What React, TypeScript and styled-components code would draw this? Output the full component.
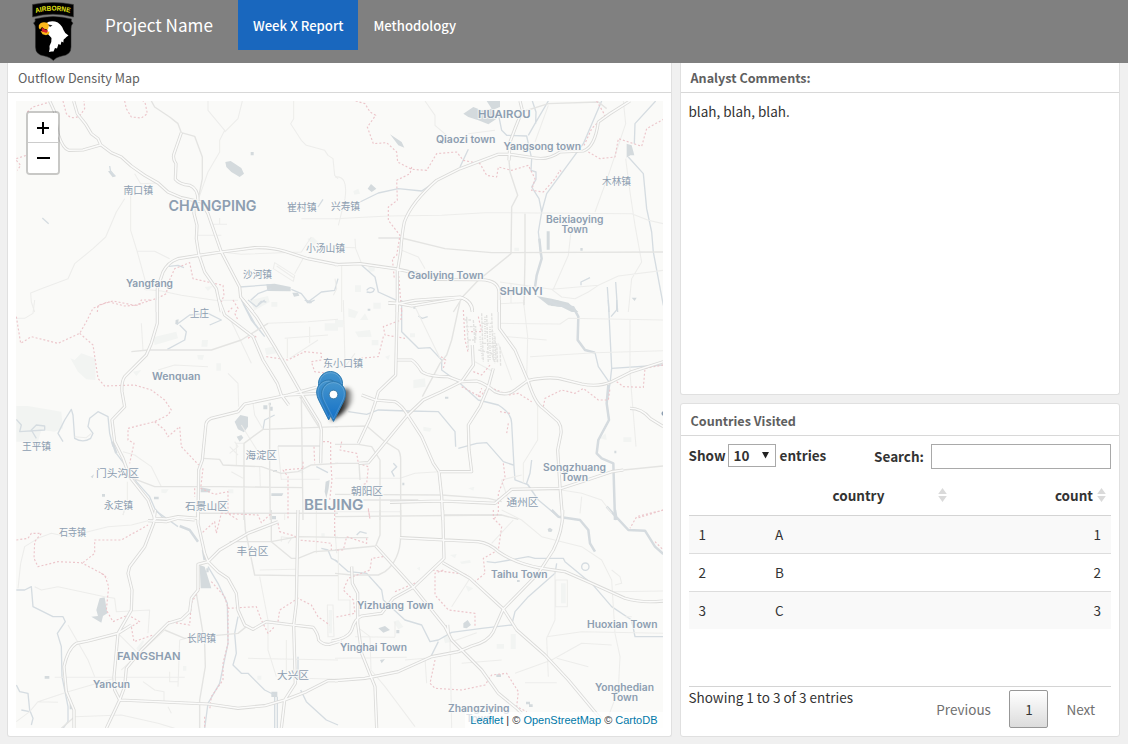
import React from "react";
import styled, { createGlobalStyle } from "styled-components";

const sans = '"Noto Sans CJK SC", "Open Sans", sans-serif';

const GlobalStyle = createGlobalStyle`
  *, *::before, *::after { box-sizing: border-box; }
  body {
    margin: 0;
    background: #f0f0f0;
    color: #333;
    font: 13.5px/20px ${sans};
  }
`;

/* ---------- page ---------- */

const Page = styled.div`
  height: 744px;
  display: flex;
  flex-direction: column;
  overflow: hidden;
`;

const NavBar = styled.header`
  height: 63px;
  flex: none;
  display: flex;
  align-items: flex-start;
  background: #808080;
  color: #fff;
`;

const Brand = styled.div`
  width: 238px;
  display: flex;
  gap: 31px;
  padding-left: 32px;
  font-size: 17.1px;
  line-height: 50px;
  white-space: nowrap;
`;

const NavItem = styled.a<{ $active?: boolean }>`
  height: 50px;
  padding: 0 15px;
  font-size: 13.1px;
  line-height: 51px;
  font-weight: 500;
  white-space: nowrap;
  background: ${(p) => (p.$active ? "#1967be" : "transparent")};
`;

const Dashboard = styled.main`
  flex: 1;
  min-height: 0;
  display: grid;
  grid-template-columns: 665px 440px;
  column-gap: 8px;
  padding: 0 8px 7px 7px;
`;

const Column = styled.div`
  display: flex;
  flex-direction: column;
  gap: 8px;
  min-height: 0;
`;

const Card = styled.section<{ $height?: number; $flush?: boolean }>`
  display: flex;
  flex-direction: column;
  ${(p) => (p.$height ? `height: ${p.$height}px;` : "flex: 1; min-height: 0;")}
  background: #fff;
  border: 1px solid #e0e0e0;
  ${(p) => p.$flush && "border-top: 0;"}
  border-radius: ${(p) => (p.$flush ? "0 0 3px 3px" : "3px")};
`;

const CardTitle = styled.h2<{ $bold?: boolean; $tall?: boolean }>`
  flex: none;
  height: ${(p) => (p.$tall ? 32 : 30)}px;
  margin: 0;
  padding: 0 0 0 ${(p) => (p.$bold ? 9.5 : 10)}px;
  border-bottom: 1px solid #d8d8d8;
  color: #606060;
  font-size: 12.6px;
  font-weight: ${(p) => (p.$bold ? 700 : 400)};
  line-height: ${(p) => (p.$tall ? 33 : 29)}px;
`;

/* ---------- map ---------- */

const MapFrame = styled.div`
  position: relative;
  width: 647px;
  height: 627px;
  margin: 8px 0 0 8px;
  background: #fafaf8;
  overflow: hidden;
`;

const MapSvg = styled.svg`
  display: block;
`;

const ZoomControl = styled.div`
  position: absolute;
  left: 10px;
  top: 10px;
  width: 34px;
  border: 2px solid rgba(0, 0, 0, 0.2);
  border-radius: 4px;
  background-clip: padding-box;
`;

const ZoomButton = styled.button`
  display: grid;
  place-items: center;
  width: 30px;
  height: 30px;
  padding: 0;
  border: 0;
  background: #fff;
  &:first-child {
    border-bottom: 1px solid #ccc;
    border-radius: 2px 2px 0 0;
  }
  &:last-child { border-radius: 0 0 2px 2px; }
  svg { display: block; }
`;

const Attribution = styled.div`
  position: absolute;
  right: 0;
  bottom: 0;
  padding: 0 5.5px 0 5px;
  background: rgba(255, 255, 255, 0.7);
  color: #333;
  font: 11px/16px "Liberation Sans", Arial, sans-serif;
  white-space: nowrap;
  a { color: #0078a8; }
`;

interface Tile {
  x: number;
  y: number;
  motorway: string;
  road: string;
  minor: string;
  river: string;
  wide: string;
  water: string;
  land: string;
  border: string;
}

/* Each tile is drawn at three units to the pixel from its own origin. */
const tiles: Tile[] = [
  {
    x: -8, y: -9,
    motorway:
      "M125 27L140 60L150 125Q165 170 182 175L225 174L280 158 M197 27L208 65L232 95L250 125L270 140L278 158L310 182L340 195L370 222L410 250L450 273L480 300L520 317L580 330 M520 122L498 185Q493 200 504 215L502 262Q515 278 545 280Q570 290 570 325 M580 330L600 365L640 480L695 585L698 615L735 660 M557 330L558 365L567 400L565 440L573 490L590 540L625 590L640 660 M448 660L448 590L465 540Q480 510 510 500L573 490L640 480L740 467Q790 465 830 478L900 500L990 518",
    road: "M430 27L440 45L485 75L510 95L520 122L560 133L583 195L583 260L570 325",
    minor:
      "M600 27L600 55L650 115L635 145L635 180L600 240L570 325 M650 120L690 80L703 27 M857 27L857 80L848 95L880 145L895 160L950 175L960 190L975 200L980 250L990 260 M380 245L398 275L450 273 M368 308L368 415L388 480L410 560L415 595 M388 478L440 478L485 500 M350 320L325 360L293 435L255 470L200 515L180 560L100 590L68 603L70 630L80 660 M408 592L460 597L520 610L620 625L690 625 M615 397L657 397M635 378L635 397M570 430L640 430 M880 380L990 380 M640 480L700 487L880 480L910 435M885 500L860 545 M800 512L860 550L856 568L796 530Z M806 522L858 558",
    river:
      "M483 523L510 520L528 527 M728 625L750 605L790 590M850 592L880 605L900 630L940 600L980 595L990 560 M695 585L790 578 M305 222L308 240L322 253 M103 378L122 395 M945 322L930 345 M750 638L760 628L775 630",
    wide: "",
    water:
      "M652 210L668 207L700 228L708 245L695 255L670 240L655 225Z M300 238L310 236L323 253L314 256Z M728 180h9v10h-9z M775 577L800 575L848 585L848 598L778 597Z M853 602L870 602L874 611L858 614Z M893 625L914 626L910 634L897 634Z",
    land: "M725 625L780 612L785 630L740 655Z M790 630h18v14h-18z M898 440L915 435L930 450L915 462Z M590 585L615 582L600 597Z",
    border:
      "M58 60L75 45L125 30 M165 27L175 65Q190 85 215 72L230 50L228 27 M350 27L355 50L370 75L400 78L418 65L412 35L405 27 M25 200L55 190M25 205L38 220L28 235 M268 660L270 640L315 627L380 640L450 618L475 605L480 575L500 530L545 512L555 560L600 570L645 580L648 610L640 630 M660 660L675 645",
  },
  {
    x: 319, y: -9,
    motorway:
      "M885 27L825 65L790 90Q780 165 745 177L675 180Q640 205 600 198L525 187L490 187L375 230L305 265Q230 330 208 390Q200 430 197 480L187 540L187 660 M555 27L562 55L540 110L525 150L522 205 M0 518L75 515L180 530L250 545L300 562L440 563Q490 565 492 600L492 660 M160 632L187 635L240 625L375 615Q410 625 412 660",
    road: "M522 205L525 240L548 310L530 345L528 485L430 565L385 612L355 660 M130 438L200 438L330 470L470 482L985 480 M570 365L570 500L567 640 M560 60L640 35L790 30L815 50",
    minor:
      "M0 380L160 372L320 370L450 362L890 365L940 385L985 395 M270 27L300 70L300 100L335 130 M865 27L872 95L820 250L780 360 M872 200L885 300L900 400L920 510L890 560L880 660 M985 535L850 552L790 580L650 592L495 570 M655 592L700 490L710 400 M650 592L680 615L720 620L760 600L790 580 M60 440L62 470L80 515 M200 475L250 495L270 530 M0 255Q40 250 30 320L10 400 M0 465L60 467 M20 517L20 660 M400 125L480 115 M492 635L570 632 M528 575L528 635 M640 40L600 150 M0 560L5 590L-5 610",
    river:
      "M75 330L130 303L190 290L260 297L300 270 M400 172L375 225 M492 75L500 115L515 130L575 132L590 200L588 235L603 240L603 262L590 285L612 320L620 360L610 420L617 480 M640 27L600 95L580 130 M592 27L603 60L602 95 M800 27L745 155L635 305L620 360 M962 27L900 95L898 155 M880 195L925 245L935 350L950 420L955 480L985 640 M80 520L120 555L130 600L185 625 M817 585L822 660M842 570L848 660 M738 580L738 570L765 557 M95 595Q105 580 118 592Q115 605 95 600",
    wide: "M613 440L617 480L620 500L605 550L600 585",
    water:
      "M385 65L415 45L440 55L470 50L455 27L495 27L495 45L478 52L485 80L460 97L430 85L400 75Z M165 127L200 150L208 167L190 160Z M98 290L108 276L124 290L110 300Z M875 155L890 160L898 190L886 190L875 197Z M635 418h9v55h-9z M605 612L650 620L700 632L730 660L710 660L680 645L640 640Z M890 617h15l-6 10z M736 468h7v8h-7z",
    land: "M55 298L70 290L75 305L58 308Z M100 525L120 525L118 538L100 540Z M60 580h18v20h-18z M538 467h14v10h-14z M115 632h22v18h-22z",
    border:
      "M62 27L90 35L105 60L122 70L97 105L115 155L155 152L185 180L188 210L230 232L275 235L305 185L365 180L385 205L435 215L455 250L485 255L490 225L530 235L580 220L600 260L590 295L625 300L660 260L675 235L680 240 M230 225L225 245L185 265L187 325L160 345L160 385L195 430L185 490L172 500L178 560 M190 540L200 660 M785 27L810 70L770 110L745 165 M760 180L795 200L840 195L850 140L920 163L935 110L985 82",
  },
  {
    x: -8, y: 199,
    motorway:
      "M448 0L448 70L430 130L415 165L350 230Q340 245 342 275L350 320L312 360L320 425L345 475L365 530L420 600L442 660 M633 0L650 45L735 110L765 180L808 250L820 285L842 315 M705 0L745 50L800 140L880 280L935 370L940 390L938 490 M925 262L840 285L710 312L690 335L610 355Q593 362 593 380L583 480L572 510L570 660 M840 285L940 280 M440 655L475 657L510 650L570 655",
    road: "M370 155L420 150L610 150L700 120L780 70 M765 388L990 380 M708 430L765 388 M708 430L708 660 M785 310L785 500L787 660 M880 285L885 660 M810 438L938 438 M585 475L635 478L645 495L760 500L820 520L870 515L910 495L990 490 M375 535L440 560L640 560L885 563 M575 640L885 640L990 640 M875 290L935 385",
    minor:
      "M780 70L900 65L990 58 M685 495L685 430L708 430 M665 460L690 440L680 425 M665 440L690 465 M345 455L380 465L430 500L460 560 M820 538L935 538 M735 310L740 345L765 388 M660 220L690 250L692 320 M830 115L960 105M905 130L905 80M838 115L838 175 M400 70L405 150 M668 60L730 190 M810 438L820 540 M755 500L757 560 M670 515L705 535 M450 210L500 195L600 200 M358 545L358 600L345 645 M700 375L750 455 M845 175L930 120 M25 55L50 55L75 40L80 0 M830 640L830 660 M200 410L235 413L250 400",
    river:
      "M25 358L40 375L35 395L110 390L110 378L85 375L70 390L85 415 M165 425L150 400L170 360L190 328L195 345L200 415Q225 430 248 415L255 400L240 380L245 355L270 335L300 350L305 400L315 440 M325 460L355 500 M375 525L385 545L425 590L440 625L470 660 M508 72L545 45L600 40L640 60L605 75 M515 75L535 95L530 120L478 148 M705 10L730 60L770 110 M765 388L770 360L800 345 M720 0L745 20L770 0 M890 0L905 8L920 0 M700 0L740 70L770 110 M925 500L960 518",
    wide: "M313 425L325 460",
    water:
      "M680 365L697 345L720 350L720 380L708 397L690 388Z M686 410L700 405L706 413L695 425Z M766 316h12v12h-12z M782 308h7v8h-7z M785 320h9v12h-9z M578 562L608 568L605 577L578 577Z M790 580L826 580L822 588L790 588Z M953 545L965 540L962 565L955 595L950 575Z M503 60L512 58L510 75L502 72Z M438 590h14v8h-14z M248 530L258 523L254 535Z M282 582h9v8h-9z M795 510h12v6h-12z",
    land: "M25 318L60 318L160 335L165 385L140 395L100 390L90 425L25 425Z M187 175L200 180L220 160L262 175L262 240L235 238L210 215Z M950 70h40v22h-40z M435 112L505 95L510 115L440 135Z M582 120L600 120L598 140L580 140Z M375 215L400 210L385 228Z M568 165L588 165L584 180L570 178Z M460 568L482 568L474 580L460 578Z M625 190h14v22h-14z M770 145L795 140L805 160L775 165Z M660 568h16v12h-16z M870 515L888 512L885 522Z",
    border:
      "M25 50L38 130L70 110L150 130L215 100L235 65L255 25L300 5L350 18L395 15L400 0L430 0 M215 100L255 135L270 235L290 258L380 255L430 270L470 300L490 330L480 345L440 365L360 385L360 420L378 430L365 490 M440 365L470 390L480 410L515 380L520 440L572 495 M585 505L578 565L620 583L660 575L660 640L690 660 M560 565L560 590 M675 0L690 25L680 40L690 60 M720 115L735 105L750 115 M775 170L840 180L890 155L940 160L940 180L910 185L920 215L960 220 M885 505L825 510L840 530L840 660 M945 425L968 425L968 480L972 540L965 600 M918 440L920 490 M885 485L885 505",
  },
  {
    x: 319, y: 199,
    motorway:
      "M187 0L182 225L130 275L120 310L105 355L70 430 M80 285L120 300L180 305Q200 315 218 345L260 410L295 490L312 515L320 590L323 660 M187 180L230 180Q245 190 260 215Q280 230 340 230L380 245L425 243Q450 250 480 275Q515 290 540 270L578 242Q630 230 670 235L740 252Q790 262 830 245L890 215L985 185 M493 0L493 85L540 150L580 245Q600 310 625 325L670 365Q680 380 678 400L668 450L675 560L683 660 M412 135L415 195L380 245L320 275L265 300L218 345L100 488L72 490 M475 205L460 260L435 320L400 375L402 450L410 515L315 515 M165 607L320 603L480 610L530 568L680 565L740 545L830 515L865 510 M885 325Q920 325 945 355L985 380 M160 10L187 10L230 18L380 -7Q412 5 412 30",
    road: "M0 380L95 378L150 425L190 450Q197 460 197 480L197 660 M0 433L70 433L110 440L135 480L135 660 M0 490L72 490L75 540 M85 600L250 600 M0 583L320 585L460 595L500 605 M865 510L985 498 M375 5L350 120L335 165L315 190L262 290 M325 645L500 645",
    minor:
      "M0 535L195 535L240 520L312 515 M490 70L675 72L700 55L985 60 M515 110L635 120 M585 170L780 158L985 152 M565 0L578 110L575 240L608 320L608 420L565 490L565 550 M885 60L885 220L903 440 M0 635L195 635 M25 0L30 190 M680 570L740 580L800 600L830 640 M240 20L315 175 M740 590L735 640 M520 600L500 540L560 525 M490 130L530 240 M420 185L475 215 M0 200L30 200L60 160",
    river:
      "M200 0L200 95L250 145L285 143L320 180L320 210L375 250L430 300L490 315Q530 340 530 370L537 500L540 540L580 555L610 600L670 650 M40 335L95 343L130 330L220 333L310 335L360 395L362 440M370 445L425 430L455 428L505 485L535 495 M820 0L830 205L985 195 M590 480L585 520L575 550L610 600 M845 0L845 30L828 50 M830 205L825 250 M250 48L262 55L278 50 M175 490L185 500L170 515L178 530 M780 158L790 200L825 250L815 310L822 360L790 420",
    wide: "M640 0L665 15L715 22L730 50L728 120L750 150L780 158 M820 255L815 310L822 360L790 420L785 460L800 475L835 490L840 660",
    water:
      "M630 0L665 0L720 22L650 18Z M330 290h10v6h-10z M838 452h6v8h-6z M98 26h8v6h-8z M202 548h6v8h-6z M235 18h8v8h-8z",
    land: "M0 60h24v22h-24z M60 95L105 90L110 110L70 112Z M235 240L270 235L272 260L235 265Z M150 170L165 165L160 180Z M795 415L812 400L815 420Z M865 412h24v14h-24z M265 380L290 385L285 395L265 392Z M400 565L418 560L415 572Z M75 60L90 40L100 60Z M40 25L70 35L60 55L40 50Z M225 100h15v12h-15z M110 120h20v16h-20z",
    border:
      "M200 30L198 60L145 80L150 105L210 115M145 110L130 170L75 175 M385 30L390 120L400 160 M318 170L332 180L325 205 M430 50L440 95L400 95 M415 215L440 225L465 195 M380 260L435 290L460 260L520 285L550 280L590 305 M495 335L525 340M520 370L515 400 M430 290L440 265 M625 320L630 295L680 270L720 280L745 265L790 300L820 300L825 265 M845 245L865 260L925 262L930 205L985 195 M20 425L15 450L65 460L70 490L100 500L95 550L80 555 M100 625L105 660 M505 490L510 530L490 580L490 640L475 660 M985 630L905 655",
  },
  {
    x: -8, y: 409,
    motorway:
      "M570 0L570 40L590 130L600 155L630 185L660 205L685 250L690 300L710 345L735 358L775 335L855 345L915 352Q930 370 932 390Q945 405 965 403L1000 392 M600 155L570 163L570 240L550 265L545 305L520 328L480 340L400 420L355 475L350 530L335 570L295 655 M442 0L437 40L410 110L365 170L360 190L372 240L370 300L330 370L318 500L320 540L335 570L600 582L690 595L770 587L830 570L895 545L960 512L990 512 M370 345L330 370L240 393L205 400Q180 415 168 470L175 545L198 600L198 655 M870 0L865 280L857 345L862 520L830 570L820 655 M420 32L475 35L510 25L560 30 M600 155L635 120L720 70L810 35",
    road: "M575 10L990 10 M708 0L712 60L740 195L865 197L990 197 M665 95L790 95L870 80L990 82 M790 0L790 95L850 145L870 145L920 125L990 120 M565 250L590 400L592 470L575 570L575 655 M470 360L530 385L690 370L715 350 M200 620L160 655",
    minor:
      "M30 235L38 160L50 110L90 85L130 70L180 80L300 50L370 45L420 32 M80 230L100 240L150 230L290 260L320 265L325 305L425 300L420 370 M140 502L530 502 M340 480L470 360 M515 390L510 530M485 485L485 515L510 515 M720 445L990 450 M25 635L65 605L90 575L180 545L320 505 M200 620L340 615L450 640L500 655 M405 515L440 540L468 545L468 575 M755 180L865 178 M755 200L780 330L780 420L805 500 M925 0L925 130 M880 505L990 508 M180 345L240 450L260 500 M835 390L835 490 M345 15L350 0 M330 370L400 440 M820 95L820 80L850 85L840 100 M490 610L480 590 M515 390L535 385 M958 285L960 380L978 380L975 285Z M90 575L150 577",
    river:
      "M25 240L50 240L70 230L75 290L135 320L165 320L172 335L148 370L160 410L162 500L180 590L180 635L165 655 M25 525L35 545L60 550L65 600L75 625L70 645M40 600L65 605 M440 0L510 50 M600 170L630 220L658 280L660 400L635 520L600 580L590 655 M690 320L680 370L685 430L675 465L700 490L720 490L770 540L800 555 M800 560L800 655M808 560L808 655 M878 540L895 575L955 630L990 645 M870 440L870 510 M940 115L960 120L970 145L990 155",
    wide: "M515 48L545 60L570 95M585 120L590 150",
    water:
      "M575 165L590 170L610 235L578 235Z M275 265L290 262L298 310L285 318L280 338L250 320L270 318L265 300Z M185 580h9v18h-9z M110 498h14v8h-14z M790 545h18v16h-18z M792 18h12v10h-12z M595 175h7v12h-7z",
    land: "M525 468h10v14h-10z M748 497h12v12h-12z M385 415L405 390L408 395L392 425Z M962 300h10v70h-10z M940 70h10v12h-10z",
    border:
      "M25 90L60 85L70 70L100 70L80 95L78 145L90 170L150 155L220 158L290 195L302 230L295 300L315 335L360 315L395 335L370 350L378 395L435 375 M225 158L260 130L260 90L340 90L420 45 M280 190L300 205 M480 335L545 345L550 280L575 235 M610 215L650 260L660 295L745 290L760 330L780 370L800 350 M810 335L815 300L870 265L910 285L930 320L965 345 M660 290L660 400L645 460L645 510L610 560L605 600M590 620L590 655 M575 75L620 35L625 70L640 10L750 15L760 38L790 10 M810 40L815 65L860 78L870 90L930 95L970 100L970 120 M980 0L980 80",
  },
  {
    x: 319, y: 409,
    motorway:
      "M323 0L327 145L235 232L175 265L140 310L80 318Q60 325 50 360Q40 385 -10 393 M50 170L52 220L68 250L68 340L80 430L120 530L125 655 M122 108L235 232L330 350L350 390L440 480L490 550L545 595L560 610 M323 158L405 205L505 297L545 360L630 435L700 510L800 630 M683 0Q685 60 655 120L610 190L505 297L475 365Q460 395 410 408L370 425L290 440L190 485L90 505L0 512 M195 83L430 95Q465 100 490 125Q540 160 620 175L690 185L770 220L870 265Q920 280 985 273 M338 345L340 370",
    road: "M135 0L135 75L122 108L0 120 M197 0L197 80Q195 150 150 185L130 195L50 195L0 190 M0 20L500 15L550 28 M0 83L100 83",
    minor:
      "M500 0L560 30L620 80L740 110L800 150L830 210L835 290L840 370L855 440L850 540L820 620 M660 180L660 330L635 385L640 500 M635 380L740 365L985 370 M540 490L650 450L740 400L830 405 M350 655L345 390 M570 518L665 518 M65 350L105 380L108 480L150 530L240 650 M350 290L405 205 M470 100L535 30 M0 445L215 442 M665 445L760 470 M210 450L270 445L275 520 M10 120L10 270L45 270L45 320 M180 335L180 380 M60 380L180 382 M350 395L425 368 M380 460L500 450 M662 210h35v80h-35z M835 245L985 243 M830 180L855 200L860 220L840 225 M870 320L890 320 M0 60L5 130",
    river:
      "M0 150L40 185L95 190L140 240L145 270L210 330L260 345L285 395L310 390L350 367L440 355L530 345L540 305L580 260L660 190L665 160 M455 155L480 158L580 140L600 145L665 145L685 145L690 155L750 205L770 220L830 290L890 330L900 380L985 380 M310 395L285 445 M740 170A11 11 0 1 0 762 170A11 11 0 1 0 740 170 M65 75L75 65L95 70",
    wide: "M650 0L670 20L735 30L760 60L765 100L780 125 M815 -10L880 60L930 62L960 110L985 132 M840 0L845 30",
    water:
      "M638 57L645 53L653 59L649 66L640 65Z M385 340L398 330L408 345L395 355L385 353Z M130 355L150 348L165 360L145 368Z M184 360h9v10h-9z M484 493h14v8h-14z M573 575h12v8h-12z M582 583h11v8h-11z M546 210h8v6h-8z M135 450L150 447L140 460Z",
    land: "M527 372h15v45h-15z M485 402h22v14h-22z M678 220h14v60h-14z M345 135L365 132L360 145Z M375 155L405 150L408 158L380 162Z M390 225L415 235L400 245Z M325 380L345 375L350 395L330 400Z M175 335L190 330L205 350L190 358Z M245 175L255 170L255 182Z",
    border:
      "M475 0L475 25L500 50L490 120L445 145L450 190L420 215 M100 0L105 25 M95 85L95 100L35 80L25 120L0 120 M145 140L110 145L105 180L40 205L25 240L55 270L60 310L0 322 M325 180L300 190L300 255L340 300L420 310L420 350 M180 245L250 215L290 180L370 190L400 195 M300 450L285 520L300 535L380 540L450 525L470 495L515 490L550 545L545 590L575 605 M985 0L905 20L885 55 M960 95L985 120",
  },
];

const Layer = ({ of, ...rest }: { of: keyof Omit<Tile, "x" | "y"> } & React.SVGProps<SVGPathElement>) => (
  <>
    {tiles.map((t) => (
      <path key={`${t.x},${t.y}`} d={t[of]} transform={`translate(${t.x} ${t.y}) scale(.33333)`} fill="none" strokeLinejoin="round" {...rest} />
    ))}
  </>
);

/* text, left, right, baseline, size */
type Place = [string, number, number, number, number];

const places: Place[] = [
  ["HUAIROU", 478, 530.5, 118, 11],
  ["Qiaozi town", 436, 495.5, 143, 10],
  ["Yangsong town", 503.5, 581, 149.5, 10],
  ["Beixiaoying", 546, 603.5, 223.3, 10],
  ["Town", 561.5, 588, 233.3, 10],
  ["CHANGPING", 168.5, 256.5, 211, 14.5],
  ["Yangfang", 126, 173, 286.5, 10],
  ["Gaoliying Town", 407.5, 483.5, 278.7, 10],
  ["SHUNYI", 499.5, 542.5, 295.3, 11],
  ["Wenquan", 152, 200.5, 379.7, 10],
  ["BEIJING", 304, 363.5, 509.5, 14.5],
  ["Songzhuang", 543, 606, 470.5, 10],
  ["Town", 561, 588, 480.5, 10],
  ["Taihu Town", 491, 547.5, 578.3, 10],
  ["Yizhuang Town", 357, 433.5, 609, 10],
  ["Huoxian Town", 587, 657.5, 628, 10],
  ["Yinghai Town", 340, 407, 650.5, 10],
  ["FANGSHAN", 117, 180.5, 660, 11],
  ["Yancun", 93, 130, 688, 10],
  ["Yonghedian", 595, 654, 690.5, 10],
  ["Town", 611, 638, 700.5, 10],
  ["Zhangziying", 448, 509.5, 712, 10],
  ["Town", 466, 492, 722, 10],
];

const chinesePlaces: Place[] = [
  ["南口镇", 123.5, 153, 194, 10],
  ["木林镇", 602, 631, 185, 10],
  ["崔村镇", 287, 316.5, 211, 10],
  ["兴寿镇", 331, 360, 210, 10],
  ["小汤山镇", 306, 345, 252.3, 10],
  ["沙河镇", 243, 272, 277.5, 10],
  ["上庄", 190, 209, 317, 10],
  ["东小口镇", 323, 363, 367, 10],
  ["王平镇", 22, 51, 449.5, 10],
  ["海淀区", 245.5, 277, 459, 10.5],
  ["门头沟区", 96, 139, 477, 10.5],
  ["永定镇", 104, 133, 509, 10],
  ["石景山区", 185, 228, 509.5, 10.5],
  ["朝阳区", 351, 383, 494.5, 10.5],
  ["通州区", 506.5, 538.5, 505.7, 10.5],
  ["石寺镇", 59, 86, 536, 10],
  ["丰台区", 236.5, 268.5, 554.5, 10.5],
  ["长阳镇", 187, 216, 641.7, 10],
  ["大兴区", 277, 309, 679.3, 10.5],
];

const PlaceNames = styled.g`
  fill: #8d9eb1;
  stroke: #fafaf8;
  stroke-width: 2px;
  stroke-opacity: 0.75;
  paint-order: stroke;
  font-family: "Inter", "Open Sans", sans-serif;
  font-weight: 600;
`;

const ChineseNames = styled(PlaceNames)`
  font-family: "Noto Sans CJK SC", sans-serif;
  font-weight: 400;
`;

const renderPlace = ([text, left, right, base, size]: Place) => (
  <text key={text + left} x={left - 16} y={base - 101} fontSize={size} textLength={right - left} lengthAdjust="spacingAndGlyphs">
    {text}
  </text>
);

const Pin = ({ x, y }: { x: number; y: number }) => (
  <g transform={`translate(${x - 12.5} ${y})`}>
    <path
      d="M12.5 .5C5.9 .5 .5 5.9 .5 12.5C.5 15.7 1.4 18.3 2.6 20.8L12.5 40.4L22.4 20.8C23.6 18.3 24.5 15.7 24.5 12.5C24.5 5.9 19.1 .5 12.5 .5Z"
      fill="url(#pinFill)"
      stroke="#2f7ab0"
    />
    <path
      d="M12.5 1.7C6.5 1.7 1.7 6.5 1.7 12.5C1.7 15.5 2.5 17.9 3.7 20.3L12.5 37.8L21.3 20.3C22.5 17.9 23.3 15.5 23.3 12.5C23.3 6.5 18.5 1.7 12.5 1.7Z"
      fill="none"
      stroke="#fff"
      strokeOpacity=".16"
    />
    <circle cx="12.5" cy="13.5" r="4.3" fill="#fff" stroke="#2e6c97" strokeWidth=".8" />
  </g>
);

const DensityMap = () => (
  <MapFrame>
    <MapSvg width="647" height="627" viewBox="0 0 647 627">
      <defs>
        <linearGradient id="pinFill" x1="0" y1="0" x2="0" y2="1">
          <stop offset="0" stopColor="#4595cd" />
          <stop offset="1" stopColor="#126fc6" />
        </linearGradient>
        <linearGradient id="pinShade" x1="0" y1="0" x2="1" y2="0">
          <stop offset="0" stopColor="#000" />
          <stop offset=".55" stopColor="#000" stopOpacity=".8" />
          <stop offset="1" stopColor="#000" stopOpacity=".15" />
        </linearGradient>
        <filter id="soft" x="-40%" y="-40%" width="180%" height="180%">
          <feGaussianBlur stdDeviation="2.2" />
        </filter>
      </defs>
      <Layer of="land" fill="#f2f4f2" />
      <Layer of="water" fill="#d4dadd" />
      <Layer of="river" stroke="#d5dce1" strokeWidth={4} />
      <Layer of="wide" stroke="#d5dbdf" strokeWidth={7.5} />
      <Layer of="minor" stroke="#ededeb" strokeWidth={3.2} />
      <Layer of="road" stroke="#e4e4e2" strokeWidth={4.2} />
      <Layer of="border" stroke="#ecc6cb" strokeWidth={3.5} strokeDasharray="6 6" />
      <g transform="translate(319 199) scale(.33333)" fill="none" stroke="#e2e2e0" strokeWidth="4">
        <path d="M395 50L400 150M388 60h20M392 80h30v40h-25M415 60L420 130M440 40L445 185M455 45L460 190M470 40L475 180M480 110L483 185M485 130L488 190M495 140L497 200M430 150L470 160L480 190M440 70h30M445 130h38M450 95h25" strokeDasharray="9 3" />
        <path d="M450 50v70M465 80v100M435 110l8 70M478 100v80M460 140h20" strokeDasharray="3 4" strokeWidth="6" />
      </g>
      <Layer of="motorway" stroke="#dadad8" strokeWidth={9.6} />
      <Layer of="motorway" stroke="#fbfbfa" strokeWidth={4.6} />
      <PlaceNames>{places.map(renderPlace)}</PlaceNames>
      <ChineseNames>{chinesePlaces.map(renderPlace)}</ChineseNames>
      <circle cx="648" cy="312.5" r="2.5" fill="#8d9eb1" />
      <path d="M315 320L320 302Q324 288 331 287Q339 289 336 301Q329 313 315 320Z" fill="url(#pinShade)" filter="url(#soft)" />
      <Pin x={314.5} y={270} />
      <Pin x={312.7} y={278.5} />
      <Pin x={317.5} y={280} />
    </MapSvg>
    <ZoomControl>
      <ZoomButton aria-label="Zoom in">
        <svg width="14" height="14" viewBox="0 0 14 14"><path d="M1 7h12M7 1v12" stroke="#000" strokeWidth="2" /></svg>
      </ZoomButton>
      <ZoomButton aria-label="Zoom out">
        <svg width="14" height="14" viewBox="0 0 14 14"><path d="M1 7h13" stroke="#000" strokeWidth="2" /></svg>
      </ZoomButton>
    </ZoomControl>
    <Attribution>
      <a>Leaflet</a> | © <a>OpenStreetMap</a> © <a>CartoDB</a>
    </Attribution>
  </MapFrame>
);

/* ---------- logo ---------- */

const Logo = () => (
  <svg width="42" height="62" viewBox="0 0 42 62">
    <path d="M.5 4.5Q21 .5 41.5 4.5V17Q21 11.5 .5 17Z" fill="#000" stroke="#3a3a3a" strokeWidth=".6" />
    <path id="tab" d="M3.800 13.100Q21 8.200 39 13.100" fill="none" />
    <text fill="#e6e614" fontFamily="Liberation Sans, Arial, sans-serif" fontWeight="700" fontSize="7">
      <textPath href="#tab" textLength="34.5" lengthAdjust="spacingAndGlyphs">AIRBORNE</textPath>
    </text>
    <path d="M3 19Q21 14 39.500 19Q38.500 21.500 41 23Q39 25 39 29V47Q39 55 30 56Q24 57 21.300 60.500Q18.500 57 12.500 56Q3.500 55 3.500 47V29Q3.500 25 1.500 23Q4 21.500 3 19Z" fill="#000" stroke="#2a2a2a" strokeWidth=".5" />
    <path d="M14 23.500Q17 20.500 23 21.500Q29 23 31.500 30Q33 34 36.500 35.500Q34 37 33 38.500Q31 39 31.500 42.500L29.500 41.500L28.500 45L26.500 44L25 48.500L23 48L21.500 51.500L19.500 51.500L17 52Q18 49 17.500 46Q20 42 19.500 38L15.500 33.500L15 28Z" fill="#fff" />
    <path d="M15 22.800Q9 21.200 6.800 25.500Q6.300 28.500 8 29.500L10 27Q13 30 16 29.500L17 25Z" fill="#fbb81b" />
    <path d="M8.500 31L14 32L17.500 31.500L17 34L14 35.300L10.500 34.300Z" fill="#fbb81b" />
    <path d="M9.500 28.500L11 28Q13 30 16 30.500L14.500 33L10 31.500Z" fill="#d8232a" />
    <path d="M16 24.600L20.500 25.200L18 27Z" fill="#222" />
  </svg>
);

/* ---------- table ---------- */

const Comment = styled.p`
  margin: 8px 0 0 7.5px;
`;

const TableBody = styled.div`
  flex: 1;
  display: flex;
  flex-direction: column;
  padding: 8px 8px 0;
  margin-left: -0.5px;
`;

const Controls = styled.div`
  display: flex;
  justify-content: space-between;
  height: 35px;
  font-weight: 700;
`;

const Length = styled.label`
  display: flex;
  align-items: flex-start;
  line-height: 23px;
`;

const LengthBox = styled.span`
  display: flex;
  justify-content: space-between;
  width: 48px;
  height: 23px;
  margin: 0 4px 0 2px;
  padding: 0 6px 0 5px;
  border: 1px solid #a9a9a9;
  line-height: 21px;
  svg { margin-top: 7px; }
`;

const Search = styled.label`
  display: flex;
  gap: 7px;
  line-height: 25px;
`;

const SearchInput = styled.input`
  width: 180px;
  height: 25px;
  margin: 0;
  border: 1px solid #a9a9a9;
  background: #fff;
`;

const Row = styled.div<{ $striped?: boolean; $head?: boolean }>`
  display: grid;
  grid-template-columns: 76.5px 194.5px 1fr;
  align-items: center;
  height: ${(p) => (p.$head ? 37 : 38)}px;
  padding-bottom: ${(p) => (p.$head ? 5 : 2)}px;
  border-bottom: 1px solid ${(p) => (p.$head ? "#d4d4d4" : "#ddd")};
  background: ${(p) => (p.$striped ? "#f9f9f9" : "#fff")};
  font-weight: ${(p) => (p.$head ? 700 : 400)};
`;

const Cell = styled.span<{ $right?: boolean }>`
  padding: 0 10px;
  text-align: ${(p) => (p.$right ? "right" : "left")};
`;

const HeadCell = styled.span<{ $right?: boolean }>`
  display: flex;
  align-items: center;
  justify-content: ${(p) => (p.$right ? "flex-end" : "space-between")};
  gap: 4px;
  padding: ${(p) => (p.$right ? "0 5px 0 0" : "0 13px 0 67.5px")};
`;

const Table = styled.div`
  height: 171px;
  border-bottom: 1px solid #d4d4d4;
  flex: none;
`;

const Rows = styled.div`
  ${Row}:last-child {
    height: 37px;
    padding-bottom: 1px;
    border-bottom: 0;
  }
`;

const Footer = styled.div`
  display: flex;
  justify-content: space-between;
`;

const Info = styled.span`
  line-height: 20px;
`;

const Pager = styled.div`
  display: flex;
  align-items: center;
  height: 38px;
  margin: 3px 16px 0 0;
  color: #707070;
`;

const PageNumber = styled.button`
  width: 39px;
  height: 38px;
  margin: 0 18px 0 18.5px;
  padding: 0;
  border: 1px solid #979797;
  border-radius: 2px;
  background: linear-gradient(#fff, #dcdcdc);
  color: #333;
  font: inherit;
`;

const SortArrows = () => (
  <svg width="9" height="14" viewBox="0 0 9 14">
    <path d="M4.5 0L8.800 6H.2ZM4.500 14L8.800 8H.2Z" fill="#dadada" />
  </svg>
);

const rows = [
  { id: 1, country: "A", count: 1 },
  { id: 2, country: "B", count: 2 },
  { id: 3, country: "C", count: 3 },
];

export default function App() {
  return (
    <Page>
      <GlobalStyle />
      <NavBar>
        <Brand>
          <Logo />
          Project Name
        </Brand>
        <NavItem $active>Week X Report</NavItem>
        <NavItem>Methodology</NavItem>
      </NavBar>
      <Dashboard>
        <Card $flush>
          <CardTitle>Outflow Density Map</CardTitle>
          <DensityMap />
        </Card>
        <Column>
          <Card $flush $height={332}>
            <CardTitle $bold>Analyst Comments:</CardTitle>
            <Comment>blah, blah, blah.</Comment>
          </Card>
          <Card>
            <CardTitle $bold $tall>Countries Visited</CardTitle>
            <TableBody>
              <Controls>
                <Length>
                  Show
                  <LengthBox>
                    10
                    <svg width="7" height="7" viewBox="0 0 7 7"><path d="M0 0H7L3.5 6.5Z" fill="#222" /></svg>
                  </LengthBox>
                  entries
                </Length>
                <Search>
                  Search:
                  <SearchInput />
                </Search>
              </Controls>
              <Row $head>
                <span />
                <HeadCell>country<SortArrows /></HeadCell>
                <HeadCell $right>count<SortArrows /></HeadCell>
              </Row>
              <Table>
                <Rows>
                  {rows.map((r) => (
                    <Row key={r.id} $striped={r.id % 2 === 1}>
                      <Cell>{r.id}</Cell>
                      <Cell>{r.country}</Cell>
                      <Cell $right>{r.count}</Cell>
                    </Row>
                  ))}
                </Rows>
              </Table>
              <Footer>
                <Info>Showing 1 to 3 of 3 entries</Info>
                <Pager>
                  Previous
                  <PageNumber>1</PageNumber>
                  Next
                </Pager>
              </Footer>
            </TableBody>
          </Card>
        </Column>
      </Dashboard>
    </Page>
  );
}
